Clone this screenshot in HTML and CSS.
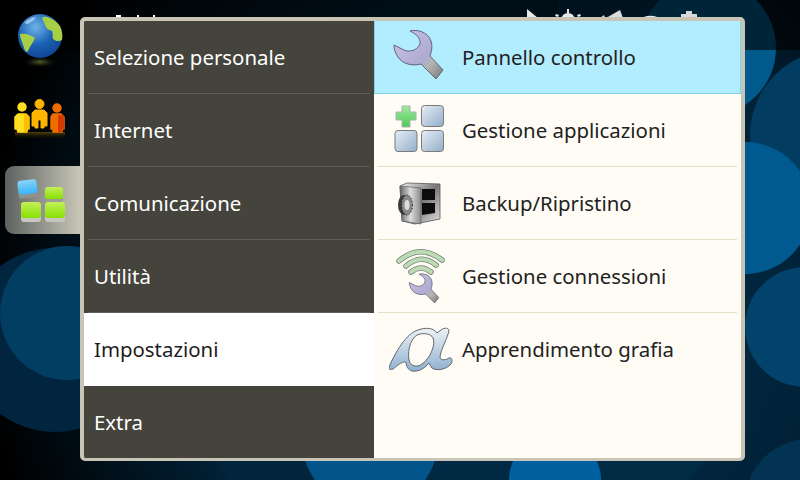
FILE: index.html
```html
<!DOCTYPE html>
<html lang="it">
<head>
<meta charset="utf-8">
<title>Menu</title>
<link rel="stylesheet" href="styles.css">
</head>
<body>
<svg class="wallpaper" viewBox="0 0 800 480" aria-hidden="true">
  <defs>
    <radialGradient id="base" gradientUnits="userSpaceOnUse" cx="500" cy="300" r="520">
      <stop offset="0" stop-color="#01304f"/><stop offset=".6" stop-color="#012339"/><stop offset="1" stop-color="#000"/>
    </radialGradient>
  </defs>
  <rect width="800" height="480" fill="url(#base)"/>
  <circle cx="300" cy="430" r="88" fill="#01253c"/>
  <circle cx="640" cy="430" r="70" fill="#012a45"/>
  <circle cx="650" cy="30" r="95" fill="#01304d"/>
  <circle cx="835" cy="135" r="85" fill="#023c60"/>
  <circle cx="708" cy="48" r="68" fill="#015a8c"/>
  <circle cx="745" cy="208" r="66" fill="#015a8f"/>
  <circle cx="805" cy="327" r="60" fill="#03436b"/>
  <circle cx="810" cy="505" r="66" fill="#023352"/>
  <circle cx="55" cy="340" r="92" fill="#01253e"/>
  <circle cx="67" cy="313" r="67" fill="#023d62"/>
  <circle cx="370" cy="440" r="68" fill="#02558a"/>
  <circle cx="555" cy="480" r="46" fill="#0160a0"/>
  <rect width="800" height="50" fill="#000" opacity=".6"/>
  <path d="M527 9 538 18H527Z" fill="#e8e8e8"/>
  <circle cx="568" cy="20" r="7" fill="#e8e8e8"/>
  <path d="M567 9h2v4h-2zM556 14l3 1-1 2-3-1zM580 14l-3 1 1 2 3-1z" fill="#e8e8e8"/>
  <path d="M606 18 620 10l3 8zM600 18l4-3 1 3z" fill="#dcdcdc"/>
  <path d="M641 20a10 6 0 0 1 19 0z" fill="#e8e8e8"/>
  <rect x="681" y="14" width="16" height="6" fill="#d8d8d8"/>
  <rect x="686" y="11" width="6" height="3" fill="#d8d8d8"/>
  <path d="M116 15h5v2h-5zM137 15h2v2h-2zM153 15h2v2h-2z" fill="#fff"/>
</svg>

<div class="page">
  <nav class="rail">
    <div class="rail-item">
      <svg class="rail-icon" viewBox="10 6 60 68" aria-hidden="true">
        <defs>
          <radialGradient id="sea" cx=".4" cy=".3" r=".8"><stop offset="0" stop-color="#6fb4ea"/><stop offset=".5" stop-color="#1c62b4"/><stop offset="1" stop-color="#0d3f8c"/></radialGradient>
          <radialGradient id="refl"><stop offset="0" stop-color="#7b8a40" stop-opacity=".7"/><stop offset="1" stop-color="#000" stop-opacity="0"/></radialGradient>
        </defs>
        <ellipse cx="40" cy="62" rx="18" ry="6" fill="url(#refl)"/>
        <circle cx="40" cy="36" r="22" fill="url(#sea)"/>
        <path d="M20 34c5-1 11 1 15 4-2 5-5 8-7 13-1 2-3 0-4-3-1-5-4-9-4-14z" fill="#a6cf45"/>
        <path d="M42 18c3-4 14 2 18 8 2 4 3 9 2 14-3 2-7 1-9-1-1-4 1-8-3-9-4 0-5-6-8-12z" fill="#a6cf45"/>
        <path d="M24 23c3-3 8-6 12-6l-2 3-6 4z" fill="#bfe0f5" opacity=".7"/>
      </svg>
    </div>
    <div class="rail-item">
      <svg class="rail-icon" viewBox="10 86 60 68" aria-hidden="true">
        <defs>
          <linearGradient id="glow" x1="0" y1="0" x2="0" y2="1"><stop offset="0" stop-color="#8a6a08" stop-opacity=".6"/><stop offset="1" stop-color="#000" stop-opacity="0"/></linearGradient>
        </defs>
        <rect x="15" y="132" width="50" height="8" fill="url(#glow)"/>
        <g fill="#ffdf1e" stroke="#ffdf1e" stroke-width="1.500" stroke-linejoin="round"><circle cx="22" cy="107" r="4"/><path d="M18 114h8l3 3v12h-2v3h-9l-1-3h-2v-12z"/></g>
        <path d="M24 114h2l3 3v12h-2v3h-3z" fill="#ffbe00"/>
        <g fill="#ffb400" stroke="#ffb400" stroke-width="1" stroke-linejoin="round"><circle cx="39.500" cy="104" r="4.500"/><path d="M35 110h9l3 3v13h-3v2h-3v-8h-3v8h-3v-2h-3v-13z"/></g>
        <g fill="#ef6c00" stroke="#ef6c00" stroke-width="1.500" stroke-linejoin="round"><circle cx="57" cy="108" r="4"/><path d="M53 114h8l3 3v12h-2v3h-9v-3h-2v-12z"/></g>
        <path d="M58 115h4l2 2v12h-2v3h-4z" fill="#d63a00"/>
      </svg>
    </div>
    <div class="rail-item rail-item-active">
      <svg class="rail-icon" viewBox="10 166 60 68" aria-hidden="true">
        <defs>
          <linearGradient id="lime" x1="0" y1="0" x2="0" y2="1"><stop offset="0" stop-color="#c4f05a"/><stop offset="1" stop-color="#86e000"/></linearGradient>
          <linearGradient id="sky" x1="0" y1="0" x2="0" y2="1"><stop offset="0" stop-color="#88d4f8"/><stop offset="1" stop-color="#38b4fb"/></linearGradient>
        </defs>
        <rect x="18" y="182" width="19" height="16" rx="3" fill="#8e918c" transform="rotate(-7 27 190)"/>
        <rect x="18" y="180" width="19" height="14" rx="3" fill="url(#sky)" transform="rotate(-7 27 187)"/>
        <rect x="45" y="188" width="18" height="14" rx="3" fill="#9a9c96"/>
        <rect x="45" y="187" width="18" height="12" rx="3" fill="url(#lime)"/>
        <rect x="21" y="204" width="20" height="18" rx="3" fill="#c6c8c0"/>
        <rect x="21" y="202" width="20" height="16" rx="3" fill="url(#lime)"/>
        <rect x="45" y="204" width="20" height="18" rx="3" fill="#c6c8c0"/>
        <rect x="45" y="202" width="20" height="16" rx="3" fill="url(#lime)"/>
      </svg>
    </div>
  </nav>

  <main class="window">
    <ul class="categories">
      <li class="category">Selezione personale</li>
      <li class="category">Internet</li>
      <li class="category">Comunicazione</li>
      <li class="category">Utilità</li>
      <li class="category category-active">Impostazioni</li>
      <li class="category">Extra</li>
    </ul>
    <ul class="apps">
      <li class="app app-active">
        <svg class="app-icon" viewBox="389 30 64 56" aria-hidden="true">
          <defs>
            <linearGradient id="steel" x1="0" y1="0" x2="1" y2="1"><stop offset="0" stop-color="#c9c6ea"/><stop offset=".6" stop-color="#aeaad0"/><stop offset=".72" stop-color="#b5b5b5"/><stop offset="1" stop-color="#777"/></linearGradient>
          </defs>
          <path d="M410 32C417 30 428 33 431 42 433 48 431 54 430 57L443 71 436 80 421 65C414 67 403 66 398 58 395 54 394 50 394 46L402 50C408 54 417 52 420 45 421 39 416 35 410 32Z" fill="url(#steel)" stroke="#5a5a66" stroke-width=".9"/>
        </svg>
        <span>Pannello controllo</span>
      </li>
      <li class="app">
        <svg class="app-icon" viewBox="389 103 64 56" aria-hidden="true">
          <defs>
            <linearGradient id="tile" x1="0" y1="0" x2="1" y2="1"><stop offset="0" stop-color="#e6eef6"/><stop offset="1" stop-color="#92aec8"/></linearGradient>
            <linearGradient id="plus" x1="0" y1="0" x2="0" y2="1"><stop offset="0" stop-color="#a0eaa0"/><stop offset="1" stop-color="#4ccc58"/></linearGradient>
          </defs>
          <path d="M402 107h8v6h6v8h-6v7h-8v-7h-6v-8h6z" fill="url(#plus)" stroke="#a9b5a9"/>
          <rect x="421.500" y="106.500" width="22" height="21" rx="3" fill="url(#tile)" stroke="#7b7b7b"/>
          <rect x="395" y="131.500" width="22" height="21" rx="3" fill="url(#tile)" stroke="#7b7b7b"/>
          <rect x="421.500" y="131.500" width="22" height="21" rx="3" fill="url(#tile)" stroke="#7b7b7b"/>
        </svg>
        <span>Gestione applicazioni</span>
      </li>
      <li class="app">
        <svg class="app-icon" viewBox="389 176 64 56" aria-hidden="true">
          <defs>
            <linearGradient id="safe" x1="0" y1="0" x2="1" y2="1"><stop offset="0" stop-color="#f0f0f0"/><stop offset=".5" stop-color="#777"/><stop offset="1" stop-color="#e0e0e0"/></linearGradient>
            <linearGradient id="door" x1="0" y1="0" x2="1" y2="0"><stop offset="0" stop-color="#666"/><stop offset=".5" stop-color="#ddd"/><stop offset="1" stop-color="#8a8a8a"/></linearGradient>
          </defs>
          <path d="M400 187 407 184 440 185V220L415 225 402 222Z" fill="url(#safe)" stroke="#555" stroke-width=".8"/>
          <path d="M422 190H435V201H422Z" fill="#0c0c0c"/>
          <path d="M422 204H435V214L422 216Z" fill="#0c0c0c"/>
          <path d="M400 187 421 189V225L402 222Z" fill="url(#door)" stroke="#555" stroke-width=".6"/>
          <ellipse cx="404" cy="206" rx="6" ry="10" fill="#3a3a3a"/>
          <ellipse cx="407" cy="206" rx="5.500" ry="10" fill="#888" stroke="#222" stroke-dasharray="1.500 1.500"/>
          <ellipse cx="407" cy="206" rx="2.500" ry="5" fill="#ddd"/>
        </svg>
        <span>Backup/Ripristino</span>
      </li>
      <li class="app">
        <svg class="app-icon" viewBox="389 249 64 56" aria-hidden="true">
          <g fill="none" stroke-linecap="round">
            <g stroke="#747f74" stroke-width="5.500"><path d="M399 262Q420 244 442 261"/><path d="M406 267Q421 254 436 266"/><path d="M411 273Q421 265 431 273"/></g>
            <g stroke="#bcdab4" stroke-width="4"><path d="M399 262Q420 244 442 261"/><path d="M406 267Q421 254 436 266"/><path d="M411 273Q421 265 431 273"/></g>
          </g>
          <path transform="translate(173 256) scale(.6)" d="M410 32C417 30 428 33 431 42 433 48 431 54 430 57L443 71 436 80 421 65C414 67 403 66 398 58 395 54 394 50 394 46L402 50C408 54 417 52 420 45 421 39 416 35 410 32Z" fill="url(#steel)" stroke="#5a5a66" stroke-width="1.200"/>
        </svg>
        <span>Gestione connessioni</span>
      </li>
      <li class="app">
        <svg class="app-icon" viewBox="389 322 64 56" aria-hidden="true">
          <defs>
            <linearGradient id="alpha" x1="0" y1="0" x2="0" y2="1"><stop offset="0" stop-color="#eef2f6"/><stop offset="1" stop-color="#8fb0d0"/></linearGradient>
          </defs>
          <path fill-rule="evenodd" d="M389 368C396 352 406 335 418 331 426 328 434 329 437 334L441 331C445 328 449 329 449 332 447 340 441 350 440 358 440 362 447 361 449 359 452 358 453 362 451 365 446 371 436 372 432 369 430 367 430 365 429 364 424 370 418 373 412 372 408 371 406 367 406 363 402 362 397 367 393 370 390 371 388 370 389 368ZM420 335C412 336 407 350 409 361 410 367 417 369 422 365 430 360 436 345 433 339 431 335 425 334 420 335Z" fill="url(#alpha)" stroke="#565a60" stroke-width=".9"/>
        </svg>
        <span>Apprendimento grafia</span>
      </li>
    </ul>
  </main>
</div>
</body>
</html>
```
FILE: styles.css
```css
html, body {
  margin: 0;
  padding: 0;
  width: 800px;
  height: 480px;
  overflow: hidden;
  background: #000;
  font-family: "Noto Sans", sans-serif;
}

.wallpaper {
  position: absolute;
  left: 0;
  top: 0;
  width: 800px;
  height: 480px;
}

.page {
  position: relative;
  display: flex;
  align-items: flex-start;
  height: 480px;
}

.rail {
  display: flex;
  flex-direction: column;
  gap: 12px;
  width: 80px;
  padding-top: 6px;
}

.rail-item {
  display: flex;
  width: 70px;
  height: 68px;
  margin-left: 10px;
}

.rail-item-active {
  width: 75px;
  margin-left: 5px;
  padding-left: 5px;
  box-sizing: border-box;
  border-radius: 9px 0 0 9px;
  background: linear-gradient(90deg, #5d615e 0%, #83867f 35%, #c8c5b6 100%);
}

.rail-icon {
  width: 60px;
  height: 68px;
}

.window {
  display: flex;
  width: 657px;
  height: 437px;
  margin-top: 17px;
  border: solid #c8c5b6;
  border-width: 4px 4px 3px;
  border-radius: 5px;
  overflow: hidden;
  background: #fffcf6;
}

.categories,
.apps {
  margin: 0;
  padding: 0;
  list-style: none;
}

.categories {
  width: 290px;
  flex: none;
  background: #45443c;
}

.category {
  display: flex;
  align-items: center;
  box-sizing: border-box;
  height: 73px;
  padding: 0 0 2px 10px;
  font-size: 20.400px;
  color: #fff;
  background: linear-gradient(#5f5e55, #5f5e55) 4px 100% / 282px 1px no-repeat;
}

.category-active {
  background: #fff;
  color: #1e1e1e;
}

.apps {
  flex: 1;
}

.app {
  display: flex;
  align-items: center;
  box-sizing: border-box;
  height: 73px;
  margin: 0 4px;
  gap: 9px;
  padding-left: 11px;
  border-bottom: 1px solid #e3dfc8;
  font-size: 20.400px;
  color: #222;
}

.app:last-child {
  border-bottom-color: transparent;
}

.app-active {
  margin: 0;
  padding-left: 14px;
  background: #b2ecff;
  border: 1px solid #7fd3ea;
  border-top: 0;
}

.app-icon {
  width: 64px;
  height: 56px;
  flex: none;
}
```
